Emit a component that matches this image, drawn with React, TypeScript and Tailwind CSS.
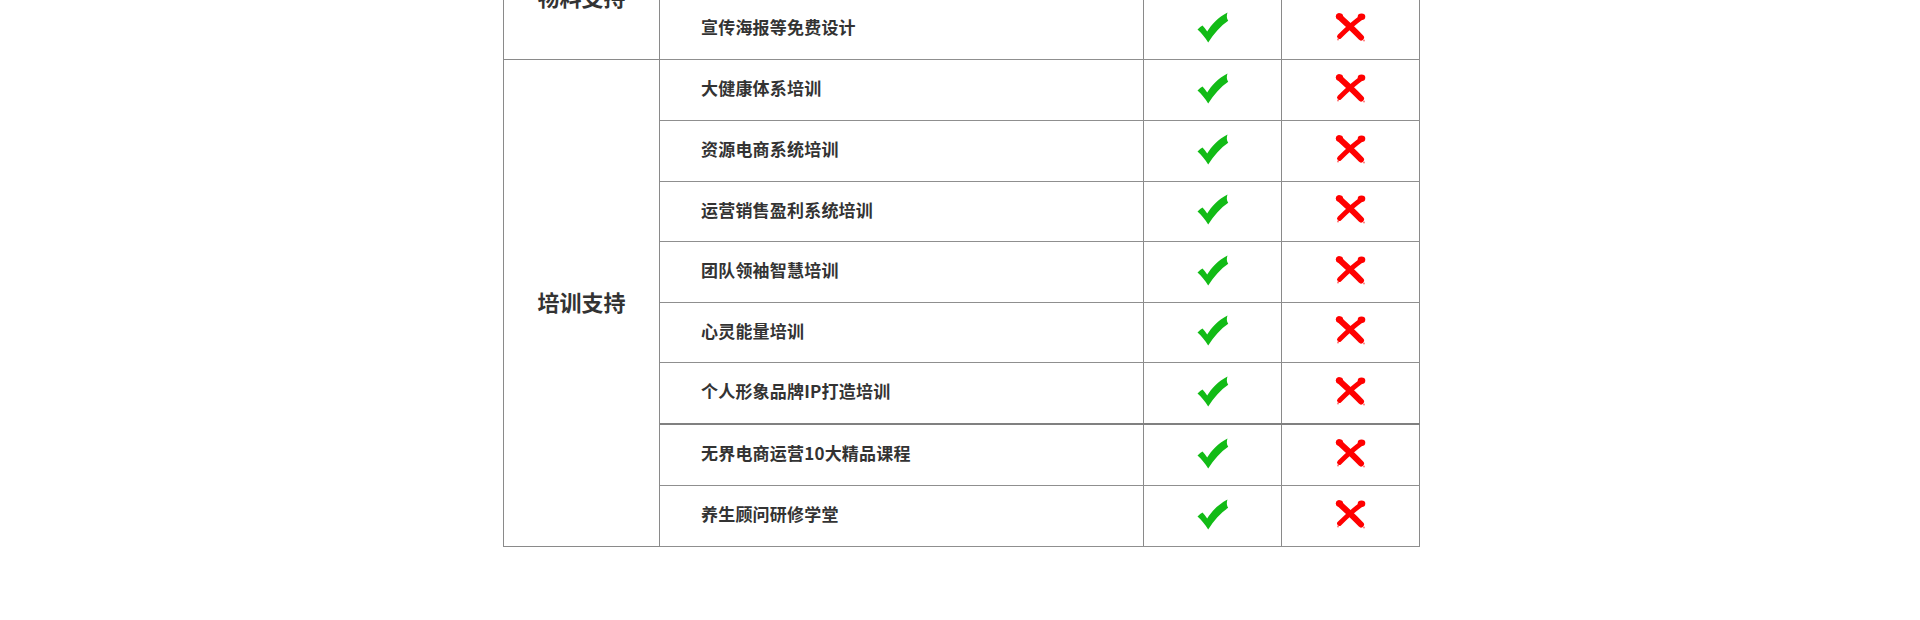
import React from "react";

const FONT = { fontFamily: '"Microsoft YaHei", "Noto Sans CJK SC", "Noto Sans", sans-serif' };

function Check() {
  return (
    <svg width="32" height="31" viewBox="0 0 32 31" className="block">
      <path
        d="M0.5 17.5 C2.5 15.5 4 14.2 5.5 13.5 C7.2 15.2 8.6 17.3 10.2 19.6 C14.5 12.5 21 5.5 30.5 0.5 C29.6 3.2 29.4 6.2 31.2 8.8 C23.5 14 17 21.5 11.2 30.5 C8 25.5 4.5 21 0.5 17.5 Z"
        fill="#12bb16"
      />
    </svg>
  );
}

function Cross() {
  return (
    <svg width="32" height="30" viewBox="0 0 32 30" className="block">
      <path d="M4 4.5 C10 10 17 16 26 25.5" stroke="#ff0000" strokeWidth="6" strokeLinecap="round" fill="none" />
      <path d="M27 5 C20 10 12 17 4.5 24.5" stroke="#ff0000" strokeWidth="4.8" strokeLinecap="round" fill="none" />
      <ellipse cx="26.5" cy="4.8" rx="3.8" ry="3.2" fill="#ff0000" />
      <ellipse cx="4.5" cy="4.5" rx="3.6" ry="3.2" fill="#ff0000" />
      <circle cx="3" cy="27.5" r="0.9" fill="#ff6a6a" />
      <circle cx="29" cy="28.5" r="0.9" fill="#ff7070" />
    </svg>
  );
}

type Row = { text: string; h: number; thick?: boolean };

function Section({ title, rows }: { title: string; rows: Row[] }) {
  return (
    <div className="flex">
      <div className="w-[157px] shrink-0 border-l border-r border-b border-[#8a8a8a] flex items-center justify-center pb-[5px]">
        <span className="text-[22px] font-bold text-[#333333] leading-none">{title}</span>
      </div>
      <div className="flex flex-col w-[760px]">
        {rows.map((r, i) => (
          <div
            key={i}
            className={
              "grid grid-cols-[484px_138px_138px] box-border " +
              (r.thick ? "border-b-2 border-[#808080]" : "border-b border-[#8f8f8f]")
            }
            style={{ height: r.h }}
          >
            <div className="border-r border-[#8a8a8a] flex items-center pl-[41px] pb-[5px]">
              <span className="text-[17px] font-bold text-[#333333] leading-none tracking-[0.2px]">{r.text}</span>
            </div>
            <div className="border-r border-[#8a8a8a] flex items-center justify-center pb-[4px]">
              <Check />
            </div>
            <div className="border-r border-[#8a8a8a] flex items-center justify-center pb-[5px]">
              <Cross />
            </div>
          </div>
        ))}
      </div>
    </div>
  );
}

export default function App() {
  return (
    <div className="w-[1920px] h-[620px] bg-white overflow-hidden" style={FONT}>
      <div className="w-[917px] ml-[503px] -mt-[62px] flex flex-col">
        <Section
          title="物料支持"
          rows={[
            { text: "门店形象物料免费提供", h: 61 },
            { text: "宣传海报等免费设计", h: 61 },
          ]}
        />
        <Section
          title="培训支持"
          rows={[
            { text: "大健康体系培训", h: 61 },
            { text: "资源电商系统培训", h: 61 },
            { text: "运营销售盈利系统培训", h: 60 },
            { text: "团队领袖智慧培训", h: 61 },
            { text: "心灵能量培训", h: 60 },
            { text: "个人形象品牌IP打造培训", h: 62, thick: true },
            { text: "无界电商运营10大精品课程", h: 61 },
            { text: "养生顾问研修学堂", h: 61 },
          ]}
        />
      </div>
    </div>
  );
}
